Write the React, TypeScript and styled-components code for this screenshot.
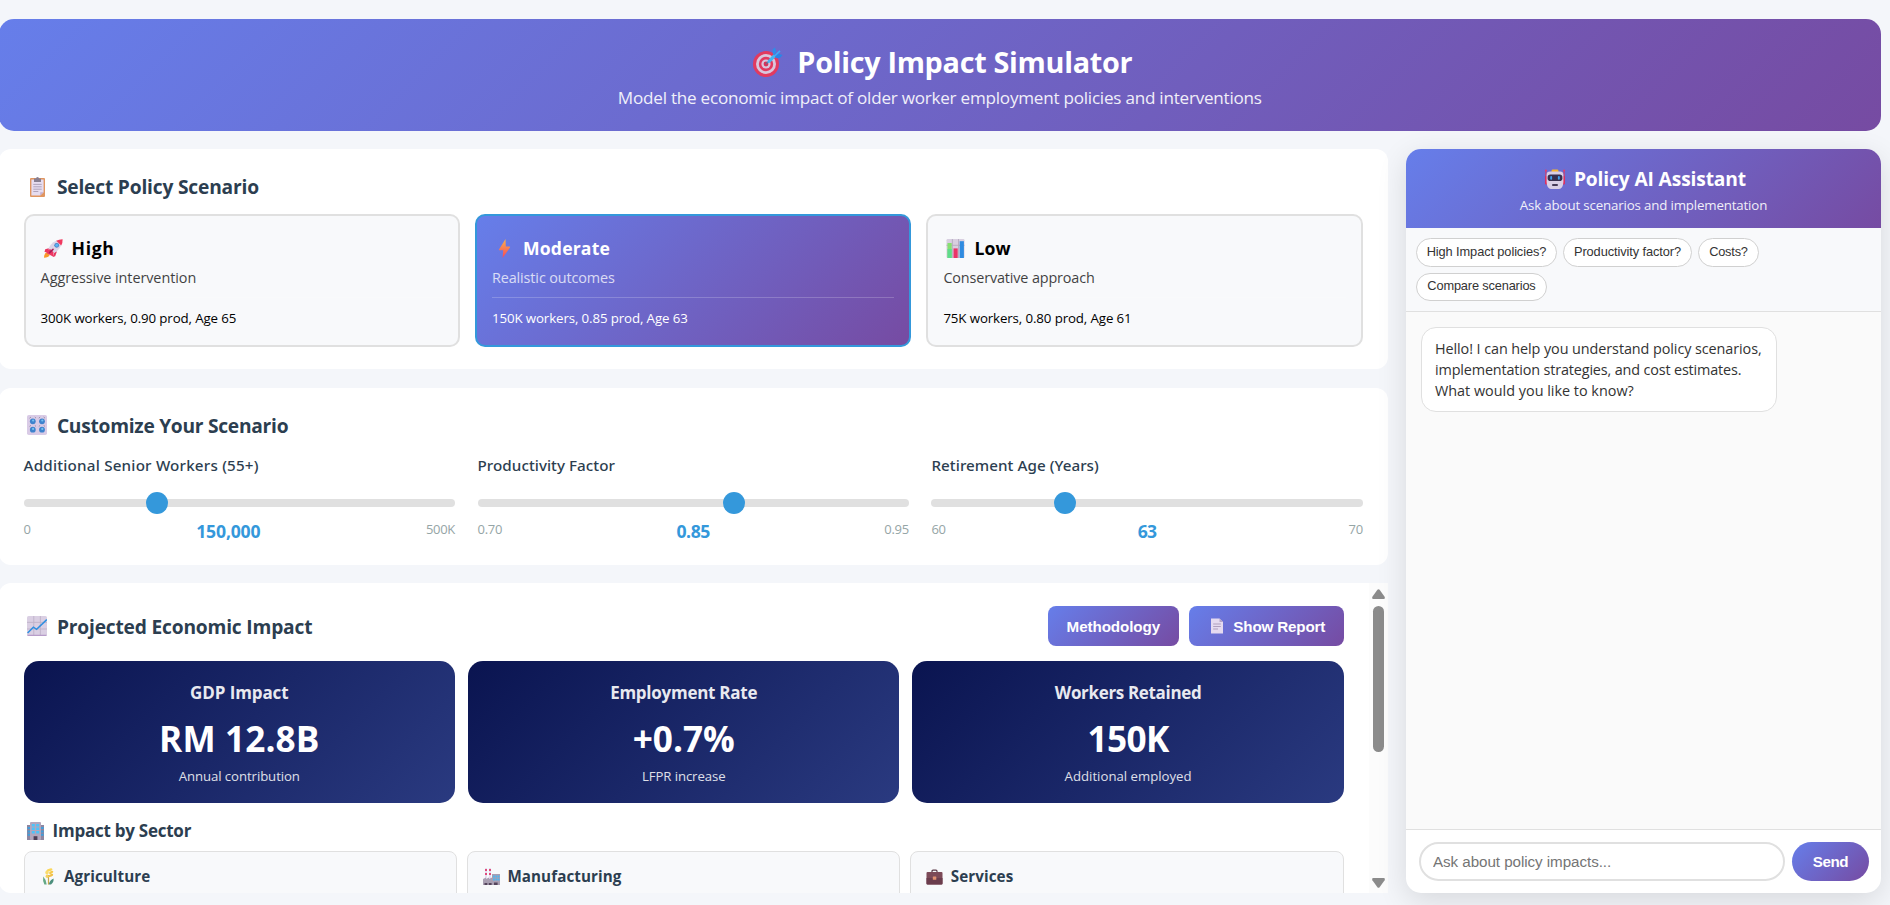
import React, { useState } from "react";
import styled, { createGlobalStyle, css } from "styled-components";

const brand = "linear-gradient(135deg, #667eea 0%, #764ba2 100%)";
const sans = '"Open Sans", "Noto Sans", sans-serif';
const arial = '"Liberation Sans", Arial, sans-serif';

const GlobalStyle = createGlobalStyle`
  * { box-sizing: border-box; }
  body {
    margin: 0;
    background: #f4f6fa;
    font-family: ${sans};
    overflow: hidden;
  }
  h1, h2, h3, h4, p { margin: 0; }
`;

/* ---------- page ---------- */

const Page = styled.div`
  width: 1882.4px;
  height: 905px;
  margin-left: -1.4px;
  padding-top: 19px;
  display: flex;
  flex-direction: column;
  gap: 18px;
`;

const Text = styled.span<{ $ls?: number }>`
  letter-spacing: ${(p) => p.$ls ?? 0}px;
`;

const Banner = styled.header`
  height: 112px;
  padding-top: 23px;
  border-radius: 15px;
  background: ${brand};
  color: #fff;
  text-align: center;
  flex: none;
`;

const BannerTitle = styled.h1`
  display: flex;
  justify-content: center;
  align-items: center;
  gap: 14px;
  padding-left: 6px;
  font-size: 28.8px;
  line-height: 40px;
  font-weight: 700;
`;

const BannerSubtitle = styled.p`
  margin-top: 1px;
  font-size: 17.1px;
  line-height: 30px;
  opacity: 0.9;
`;

const Columns = styled.div`
  display: grid;
  grid-template-columns: 1389.2px 475px;
  gap: 18.2px;
  height: 744px;
`;

const MainColumn = styled.main`
  display: grid;
  grid-template-rows: 220px 177px 310px;
  align-content: space-between;
`;

const cardBase = css`
  background: #fff;
  border-radius: 12px;
`;

const Card = styled.section`
  ${cardBase}
  padding: 23px 25px 0;
`;

const SectionTitle = styled.h2`
  display: flex;
  align-items: center;
  gap: 10.3px;
  padding-left: 3px;
  color: #2c3e50;
  font-size: 19.2px;
  line-height: 29px;
  font-weight: 700;
`;

/* ---------- scenarios ---------- */

const ScenarioGrid = styled.div`
  display: grid;
  grid-template-columns: repeat(3, 1fr);
  gap: 15px;
  margin-top: 13px;
`;

const ScenarioCard = styled.article<{ $active?: boolean }>`
  height: 133px;
  padding: 19px 15px 0;
  border-radius: 10px;
  border: 2px solid ${(p) => (p.$active ? "#3498db" : "#e0e0e0")};
  background: ${(p) => (p.$active ? brand : "#f8f9fb")};
  color: ${(p) => (p.$active ? "#fff" : "#000")};
`;

const ScenarioName = styled.h3`
  display: flex;
  align-items: center;
  gap: 9px;
  padding-left: 3px;
  font-size: 17.6px;
  line-height: 27px;
`;

const ScenarioDescription = styled.p`
  margin-top: 4px;
  font-size: 14.4px;
  line-height: 24px;
  opacity: 0.75;
`;

const ScenarioParams = styled.p`
  margin-top: 7px;
  padding-top: 10px;
  border-top: 1px solid rgba(255, 255, 255, 0.2);
  font-size: 13.3px;
  line-height: 20px;
`;

/* ---------- sliders ---------- */

const SliderGrid = styled.div`
  display: grid;
  grid-template-columns: repeat(3, 1fr);
  gap: 22.6px;
  margin-top: 13px;
`;

const SliderGroup = styled.div`
  display: flex;
  flex-direction: column;
`;

const SliderLabel = styled.label`
  color: #2c3e50;
  font-family: "Noto Sans", sans-serif;
  font-size: 15.2px;
  line-height: 24px;
  font-weight: 500;
`;

const Range = styled.input`
  appearance: none;
  width: 100%;
  height: 8px;
  margin: 22px 0 11px;
  border-radius: 4px;
  background: #e0e0e0;
  outline: none;
  &::-webkit-slider-thumb {
    appearance: none;
    width: 22px;
    height: 22px;
    border-radius: 50%;
    background: #3498db;
    cursor: pointer;
  }
`;

const SliderScale = styled.div`
  display: flex;
  justify-content: space-between;
  align-items: flex-start;
  color: #95a5a6;
  font-size: 13px;
  line-height: 22px;
`;

const SliderValue = styled.strong<{ $ls: number }>`
  color: #3498db;
  font-size: 17.6px;
  line-height: 26px;
  letter-spacing: ${(p) => p.$ls}px;
`;

/* ---------- results ---------- */

const Results = styled.section`
  ${cardBase}
  display: grid;
  grid-template-columns: 1fr 19px;
  border-radius: 12px 0 0 12px;
  overflow: hidden;
`;

const ResultsBody = styled.div`
  min-height: 0;
  padding: 23px 25px 0;
  overflow: hidden;
`;

const ResultsHeader = styled.div`
  display: flex;
  align-items: center;
  justify-content: space-between;
  height: 40px;
`;

const Actions = styled.div`
  display: flex;
  gap: 10px;
`;

const ActionButton = styled.button<{ $width: number }>`
  display: flex;
  align-items: center;
  justify-content: center;
  gap: 8px;
  width: ${(p) => p.$width}px;
  height: 40px;
  padding: 0;
  border: 0;
  border-radius: 8px;
  background: ${brand};
  color: #fff;
  font: 700 15.2px ${arial};
  svg { margin-left: 2px; }
`;

const MetricGrid = styled.div`
  display: grid;
  grid-template-columns: repeat(3, 1fr);
  gap: 13px;
  margin-top: 15px;
`;

const MetricCard = styled.article`
  height: 142px;
  padding-top: 19px;
  border-radius: 15px;
  background: linear-gradient(135deg, #0a1450 0%, #2a3a80 100%);
  color: #fff;
  text-align: center;
`;

const MetricLabel = styled.h3`
  font-size: 17px;
  line-height: 26px;
  opacity: 0.9;
`;

const MetricValue = styled.div`
  margin: 8px 0 3px;
  font-size: 35.2px;
  line-height: 48px;
  font-weight: 700;
`;

const MetricNote = styled.p`
  font-size: 13.2px;
  line-height: 22px;
  opacity: 0.85;
`;

const SectorTitle = styled.h3`
  display: flex;
  align-items: center;
  gap: 8px;
  margin-top: 14.5px;
  padding-left: 3px;
  color: #2c3e50;
  font-size: 17px;
  line-height: 26px;
`;

const SectorGrid = styled.div`
  display: grid;
  grid-template-columns: repeat(3, 1fr);
  gap: 10px;
  margin-top: 7.5px;
`;

const SectorCard = styled.article`
  height: 110px;
  padding: 12px 15px;
  border: 1px solid #e0e0e0;
  border-radius: 8px;
  background: #f8f9fb;
`;

const SectorName = styled.h4`
  display: flex;
  align-items: center;
  gap: 7.4px;
  color: #2c3e50;
  font-size: 15.2px;
  line-height: 24px;
`;

const ScrollBar = styled.div`
  display: flex;
  flex-direction: column;
  align-items: center;
  padding: 6px 0 5px;
  background: #fcfcfc;
  svg { flex: none; }
`;

const ScrollThumb = styled.div`
  width: 11px;
  height: 146px;
  margin: 7px 0 auto;
  border-radius: 6px;
  background: #8b8b8b;
`;

/* ---------- chat ---------- */

const Chat = styled.aside`
  display: flex;
  flex-direction: column;
  border-radius: 15px;
  background: #fff;
  box-shadow: 0 8px 30px rgba(0, 0, 0, 0.12);
  overflow: hidden;
`;

const ChatHeader = styled.header`
  height: 79px;
  padding-top: 15.5px;
  background: ${brand};
  color: #fff;
  text-align: center;
`;

const ChatTitle = styled.h2`
  display: flex;
  align-items: center;
  justify-content: center;
  gap: 9px;
  padding-left: 4px;
  font-size: 19.2px;
  line-height: 28px;
`;

const ChatSubtitle = styled.p`
  margin-top: 2px;
  font-size: 13.3px;
  line-height: 20px;
  opacity: 0.9;
`;

const Chips = styled.div`
  display: flex;
  flex-wrap: wrap;
  gap: 6px;
  height: 84px;
  padding: 10px;
  border-bottom: 1px solid #e0e0e0;
  background: #f8f9fb;
`;

const Chip = styled.button<{ $width: number; $ls: number }>`
  width: ${(p) => p.$width}px;
  height: 28.5px;
  padding: 0 0 2px;
  border: 1px solid #d0d0d0;
  border-radius: 15px;
  background: #fff;
  color: #333;
  font: 400 12.8px ${arial};
  letter-spacing: ${(p) => p.$ls}px;
  white-space: nowrap;
`;

const Messages = styled.div`
  flex: 1;
  padding: 15px;
  background: #fafafa;
`;

const Message = styled.div`
  width: 356px;
  padding: 10px 13px;
  border: 1px solid #e0e0e0;
  border-radius: 15px;
  background: #fff;
  color: #333;
  font-size: 14.4px;
  line-height: 21px;
  white-space: nowrap;
`;

const Composer = styled.form`
  display: flex;
  gap: 7px;
  padding: 12px 12px 12px 13px;
  border-top: 1px solid #e0e0e0;
`;

const Prompt = styled.input`
  flex: 1;
  min-width: 0;
  height: 39px;
  padding: 0 12px;
  border: 2px solid #e0e0e0;
  border-radius: 20px;
  font: 400 15.2px ${arial};
  letter-spacing: -0.06px;
  &::placeholder { color: #757575; }
`;

const SendButton = styled.button`
  width: 77px;
  height: 39px;
  padding: 0;
  border: 0;
  border-radius: 20px;
  background: ${brand};
  color: #fff;
  font: 700 15.2px ${arial};
  letter-spacing: -0.4px;
`;

/* ---------- icons ---------- */

const Icon = styled.svg<{ $size: number }>`
  width: ${(p) => p.$size}px;
  height: ${(p) => p.$size}px;
  flex: none;
  display: block;
`;

const TargetIcon = () => (
  <Icon $size={30} viewBox="0 0 30 30">
    <circle cx="13" cy="17" r="13" fill="#e23a5f" />
    <circle cx="13" cy="17" r="10" fill="#d9c6dc" />
    <circle cx="13" cy="17" r="7.2" fill="#e23a5f" />
    <circle cx="13" cy="17" r="4.6" fill="#d9c6dc" />
    <circle cx="13" cy="17" r="2.4" fill="#d6335a" />
    <path d="M13.5 16.5 20 10.5" stroke="#6b6f8c" strokeWidth="1.6" strokeLinecap="round" />
    <path d="M15 13.2 20.3 7.6 22 8l.6 2-5.4 5.6q-2 1-2.6-.2-.4-1 .4-2.2z" fill="#45b4f2" />
    <path d="M20 7.2 19.6 2.4 22 .2l1.2 4.2L21.6 8z" fill="#2f8ce8" />
    <path d="M22 9.6 23.4 6.2 29.6 8l-2.4 2.8-4 .4z" fill="#2a85e6" />
    <path d="M21 8.6 26.4 3.2l1.2 1.2-5.4 5.2z" fill="#3fa9f5" />
  </Icon>
);

const ClipboardIcon = () => (
  <Icon $size={20} viewBox="0 0 20 20">
    <rect x="3" y="1" width="15" height="19" rx="1" fill="#e0955f" />
    <path d="M4.4 2.6h12.2v12.6l-3.4 3.4H4.4z" fill="#e6dcf0" />
    <path d="M16.6 15.2h-3.4v3.4z" fill="#c3afd0" />
    <path d="M7 1.5h2q0-1.5 1.5-1.5T12 1.5h2V5H7z" fill="#877f92" />
    <path d="M6.3 7.4h8.4M6.3 9.8h8.4M6.3 12.2h8.4M6.3 14.5h5" stroke="#a99db5" strokeWidth="0.9" />
  </Icon>
);

const KnobsIcon = () => (
  <Icon $size={20} viewBox="0 0 20 20">
    <rect width="20" height="20" rx="1.8" fill="#d9cbe6" />
    <path d="M2.5 3.2 4 2M9 3.2 7.8 2M11.8 3.2 13.2 2M18 3.2 16.6 2M2.5 11.4 4 10.4M9 11.4 7.8 10.4M11.8 11.4 13.2 10.4M18 11.4 16.6 10.4" stroke="#9d93ac" strokeWidth="1" />
    {[[5.8, 6.3], [15, 6.3], [5.8, 14.7], [15, 14.7]].map(([cx, cy]) => (
      <g key={`${cx}-${cy}`}>
        <circle cx={cx} cy={cy} r="2.9" fill="#3f83cd" />
        <circle cx={cx + 0.3} cy={cy - 0.8} r="1.1" fill="#73c2f2" />
      </g>
    ))}
  </Icon>
);

const TrendIcon = () => (
  <Icon $size={20} viewBox="0 0 20 20">
    <rect width="20" height="20" rx="1.6" fill="#dacfe3" />
    <path d="M6.8 0v20M13.4 0v20M0 6.4h20M0 13h20" stroke="#bfb2ca" strokeWidth="0.9" />
    <path d="M.5 19.4h19" stroke="#b79dc9" strokeWidth="1.2" />
    <path d="M.6 17 6.4 11.2 9.6 13.4 19.8 3.6" fill="none" stroke="#2f8fe0" strokeWidth="1.5" />
  </Icon>
);

const RocketIcon = () => (
  <Icon $size={19} viewBox="0 0 19 19">
    <path d="M0 18.8q0-4.6 2.8-5.6L5.6 16Q4.6 18.8 0 18.8z" fill="#f99a2a" />
    <path d="M5.6 9 1.2 10.2.5 13l3.6.6zM10 13.4 8.8 18l2.4-.8 1.8-5z" fill="#e8365f" />
    <path d="M3.6 12.4Q5.6 4.6 12.6 1.6l4.6 4.6Q14.6 13 6.6 15.4z" fill="#ddd4e8" />
    <path d="M12.2 1.8Q15.4.1 18.6.2q.2 3.400-1.400 6.400z" fill="#f0395f" />
    <circle cx="12.7" cy="6.3" r="2.4" fill="#4c7fc4" />
    <circle cx="12.7" cy="6.3" r="1.5" fill="#56b7f5" />
    <path d="M2 10.4l4.5-.2 3 3-.5 4.2-3.4-1.6-2.8-1.6z" fill="#ee3763" />
    <path d="M5.6 13.6 9 10.4" stroke="#a81f58" strokeWidth="1.6" strokeLinecap="round" />
  </Icon>
);

const BoltIcon = () => (
  <Icon $size={19} viewBox="0 0 19 19">
    <defs>
      <linearGradient id="bolt" x1="0" y1="0" x2="0" y2="1">
        <stop offset="0" stopColor="#fdb347" />
        <stop offset="1" stopColor="#f5475c" />
      </linearGradient>
    </defs>
    <path d="M10.5 0 4 10.4q-.2.8.6.8h3.6L7.6 19 15 8.4q.2-1-.6-1h-3.6z" fill="url(#bolt)" />
  </Icon>
);

const BarsIcon = () => (
  <Icon $size={19} viewBox="0 0 19 19">
    <rect x=".5" width="18" height="19" rx="1.2" fill="#d8cfe0" />
    <path d="M6.4 0v19M12.5 0v19M.5 6.3h18" stroke="#b5abc0" strokeWidth="0.9" />
    <rect x="1.5" y="4" width="4.2" height="15" fill="#86e070" />
    <rect x="1.5" y="10" width="4.2" height="9" fill="#5fdc8c" />
    <rect x="7.5" y="9.4" width="4.2" height="9.6" fill="#ea3468" />
    <rect x="13.7" y="2.2" width="4.2" height="16.8" fill="#2f8be0" />
  </Icon>
);

const PageIcon = () => (
  <Icon $size={16} viewBox="0 0 16 16">
    <path d="M2 .5h8.5L14 4v11.5H2z" fill="#e5daf0" />
    <path d="M10.5.5 14 4h-3.5z" fill="#b5a3c6" />
    <path d="M4.2 6h7.6M4.2 8.5h7.6M4.2 11h4.8" stroke="#a898b8" strokeWidth="0.9" />
  </Icon>
);

const BuildingIcon = () => (
  <Icon $size={18} viewBox="0 0 18 18">
    <path d="M0 3h4v15H0zM13 3h4v15h-4z" fill="#8e86a0" />
    <path d="M.6 5h2.6v2H.6zM.6 8.4h2.6v2H.6zM.6 11.8h2.6v2H.6zM14 5h2.6v2H14zM14 8.4h2.6v2H14zM14 11.8h2.6v2H14z" fill="#3f9fdd" />
    <rect x="3" width="11" height="18" rx="1" fill="#b3a6bd" />
    {[2, 5.5, 9].map((y) => (
      <path key={y} d={`M4.8 ${y}h3v2.4h-3zM9.2 ${y}h3v2.4h-3z`} fill="#4cc4fa" />
    ))}
    <rect x="6.6" y="14.2" width="3.8" height="3.8" fill="#4d3e56" />
  </Icon>
);

const WheatIcon = () => (
  <Icon $size={17} viewBox="0 0 17 17">
    <path d="M8.5 16.5V7" stroke="#c9a84a" strokeWidth="1.2" />
    <ellipse cx="9.5" cy="1.9" rx="3" ry="1.3" fill="#fbd75a" transform="rotate(-14 9.5 1.9)" />
    <ellipse cx="11.2" cy="4.4" rx="2.3" ry="1.2" fill="#f6c94a" transform="rotate(-28 11.2 4.4)" />
    <ellipse cx="7" cy="4.6" rx="1.7" ry="2" fill="#fbdc6c" />
    <ellipse cx="11" cy="7.4" rx="2.4" ry="1.2" fill="#f1c04a" transform="rotate(-24 11 7.4)" />
    <ellipse cx="7.2" cy="8.2" rx="1.6" ry="1.8" fill="#f7d25d" />
    <path d="M3.2 8.5q3.3 3.5 3.5 8H4.4Q2.5 12.5 3.2 8.5z" fill="#64a985" />
    <path d="M13.6 10.5q.3 3.8-2.6 6H8.7q1-4.400 4.900-6z" fill="#4c8f7d" />
  </Icon>
);

const FactoryIcon = () => (
  <Icon $size={17} viewBox="0 0 17 17">
    <path d="M2 0h2v11H2zM6 0h2v11H6z" fill="#e5def0" />
    <path d="M2 1h2v2H2zM2 5h2v2H2zM6 1h2v2H6zM6 5h2v2H6z" fill="#df4c7d" />
    <path d="M0 11l3-1.5V11l3-1.5V11l3-1.5V17H0z" fill="#a99fb2" />
    <rect x="9" y="6" width="8" height="11" fill="#a99fb2" />
    <path d="M10 7.5h1.8v2H10zM12.6 7.5h1.8v2h-1.8zM15 7.5h1.5v2H15zM10 10.5h1.8v2H10zM12.6 10.5h1.8v2h-1.8zM15 10.5h1.5v2H15z" fill="#4cb7f3" />
    <path d="M1.5 15h2.8v2H1.5zM5.8 15h2.8v2H5.8zM11 14.5h3.6V17H11z" fill="#54455c" />
  </Icon>
);

const BriefcaseIcon = () => (
  <Icon $size={17} viewBox="0 0 17 17">
    <path d="M6 4.5V3.2q0-1 1-1h3q1 0 1 1v1.300" fill="none" stroke="#5a3947" strokeWidth="1.2" />
    <rect x=".5" y="4" width="16" height="12.5" rx="1" fill="#7c4a58" />
    <path d="M.5 10h16v5.5q0 1-1 1h-14q-1 0-1-1z" fill="#6b3d4d" />
    <rect x="6.8" y="8.4" width="3.5" height="3.3" rx=".5" fill="#e39170" />
  </Icon>
);

const RobotIcon = () => (
  <Icon $size={20} viewBox="0 0 20 20">
    <path d="M.9 1v13M19.1 1v13" stroke="#e2355f" strokeWidth="1" />
    <circle cx=".9" cy="1.5" r=".9" fill="#ee3d68" />
    <circle cx="19.1" cy="1.5" r=".9" fill="#ee3d68" />
    <rect x="0" y="7" width="2.4" height="8.5" rx="1" fill="#dc2f62" />
    <rect x="17.6" y="7" width="2.4" height="8.5" rx="1" fill="#dc2f62" />
    <path d="M6.5 3.2V2q0-1.400 1.400-1.400h4.200q1.400 0 1.400 1.400v1.200z" fill="#f8b72f" />
    <path d="M1.6 6q0-3.400 3.400-3.400h10q3.400 0 3.400 3.400v7q-.4 7-4.400 7H6q-4 0-4.400-7z" fill="#d9cfe6" />
    <rect x="2.6" y="5.6" width="14.8" height="6.400" rx="2.8" fill="#37304f" />
    <rect x="5.2" y="7" width="1.9" height="3.7" rx=".9" fill="#3fa2ee" />
    <rect x="12.9" y="7" width="1.9" height="3.7" rx=".9" fill="#3fa2ee" />
    <rect x="7" y="15" width="6" height="1.9" rx=".9" fill="#463b58" />
  </Icon>
);

const ScrollArrow = styled.svg<{ $down?: boolean }>`
  width: 13px;
  height: 10px;
  transform: ${(p) => (p.$down ? "rotate(180deg)" : "none")};
`;

const Arrow = ({ down }: { down?: boolean }) => (
  <ScrollArrow $down={down} viewBox="0 0 13 10">
    <path d="M5.4.8q1.1-1.3 2.2 0l5 7q.9 2.2-1 2.2H1.4Q-.5 10 .4 7.800z" fill="#8b8b8b" />
  </ScrollArrow>
);

/* ---------- data ---------- */

const scenarios = [
  { icon: <RocketIcon />, name: "High", nls: 0.6, text: "Aggressive intervention", tls: -0.06, params: "300K workers, 0.90 prod, Age 65" },
  { icon: <BoltIcon />, name: "Moderate", nls: 0.17, text: "Realistic outcomes", tls: -0.12, params: "150K workers, 0.85 prod, Age 63", active: true },
  { icon: <BarsIcon />, name: "Low", nls: 0.2, text: "Conservative approach", tls: -0.14, params: "75K workers, 0.80 prod, Age 61" },
];

const sliders = [
  { id: "workers", label: "Additional Senior Workers (55+)", ls: 0.2, min: 0, max: 500000, step: 10000, value: 150000, low: "0", high: "500K", vls: -0.17, format: (v: number) => v.toLocaleString("en-US") },
  { id: "productivity", label: "Productivity Factor", ls: 0.05, min: 0.7, max: 0.95, step: 0.01, value: 0.85, low: "0.70", high: "0.95", vls: -0.4, format: (v: number) => v.toFixed(2) },
  { id: "age", label: "Retirement Age (Years)", ls: 0.05, min: 60, max: 70, step: 1, value: 63, low: "60", high: "70", vls: -0.6, format: (v: number) => String(v) },
];

const metrics = [
  { label: "GDP Impact", ls: -0.1, value: "RM 12.8B", vls: 0.1, note: "Annual contribution", nls: -0.08 },
  { label: "Employment Rate", ls: -0.26, value: "+0.7%", vls: 0, note: "LFPR increase", nls: -0.09 },
  { label: "Workers Retained", ls: -0.34, value: "150K", vls: -0.6, note: "Additional employed", nls: 0 },
];

const sectors = [
  { name: "Agriculture", icon: <WheatIcon /> },
  { name: "Manufacturing", icon: <FactoryIcon /> },
  { name: "Services", icon: <BriefcaseIcon /> },
];

const chips = [
  { text: "High Impact policies?", width: 141, ls: -0.1 },
  { text: "Productivity factor?", width: 129, ls: -0.09 },
  { text: "Costs?", width: 61, ls: -0.2 },
  { text: "Compare scenarios", width: 131, ls: -0.16 },
];

type SliderProps = (typeof sliders)[number];

const Slider = ({ id, label, ls, min, max, step, value, low, high, vls, format }: SliderProps) => {
  const [current, setCurrent] = useState(value);
  return (
    <SliderGroup>
      <SliderLabel htmlFor={id}><Text $ls={ls}>{label}</Text></SliderLabel>
      <Range
        id={id}
        type="range"
        min={min}
        max={max}
        step={step}
        value={current}
        onChange={(e) => setCurrent(Number(e.target.value))}
      />
      <SliderScale>
        <Text $ls={-0.3}>{low}</Text>
        <SliderValue $ls={vls}>{format(current)}</SliderValue>
        <Text $ls={-0.3}>{high}</Text>
      </SliderScale>
    </SliderGroup>
  );
};

export default function App() {
  return (
    <>
      <GlobalStyle />
      <Page>
        <Banner>
          <BannerTitle><TargetIcon /><Text $ls={-0.3}>Policy Impact Simulator</Text></BannerTitle>
          <BannerSubtitle>
            <Text $ls={-0.235}>Model the economic impact of older worker employment policies and interventions</Text>
          </BannerSubtitle>
        </Banner>

        <Columns>
          <MainColumn>
            <Card>
              <SectionTitle><ClipboardIcon /><Text $ls={-0.19}>Select Policy Scenario</Text></SectionTitle>
              <ScenarioGrid>
                {scenarios.map((s) => (
                  <ScenarioCard key={s.name} $active={s.active}>
                    <ScenarioName>{s.icon}<Text $ls={s.nls}>{s.name}</Text></ScenarioName>
                    <ScenarioDescription><Text $ls={s.tls}>{s.text}</Text></ScenarioDescription>
                    <ScenarioParams><Text $ls={-0.12}>{s.params}</Text></ScenarioParams>
                  </ScenarioCard>
                ))}
              </ScenarioGrid>
            </Card>

            <Card>
              <SectionTitle><KnobsIcon /><Text $ls={-0.27}>Customize Your Scenario</Text></SectionTitle>
              <SliderGrid>
                {sliders.map((s) => <Slider key={s.id} {...s} />)}
              </SliderGrid>
            </Card>

            <Results>
              <ResultsBody>
                <ResultsHeader>
                  <SectionTitle><TrendIcon /><Text $ls={-0.19}>Projected Economic Impact</Text></SectionTitle>
                  <Actions>
                    <ActionButton $width={131}><Text $ls={-0.1}>Methodology</Text></ActionButton>
                    <ActionButton $width={155}><PageIcon /><Text $ls={-0.16}>Show Report</Text></ActionButton>
                  </Actions>
                </ResultsHeader>
                <MetricGrid>
                  {metrics.map((m) => (
                    <MetricCard key={m.label}>
                      <MetricLabel><Text $ls={m.ls}>{m.label}</Text></MetricLabel>
                      <MetricValue><Text $ls={m.vls}>{m.value}</Text></MetricValue>
                      <MetricNote><Text $ls={m.nls}>{m.note}</Text></MetricNote>
                    </MetricCard>
                  ))}
                </MetricGrid>
                <SectorTitle><BuildingIcon /><Text $ls={-0.25}>Impact by Sector</Text></SectorTitle>
                <SectorGrid>
                  {sectors.map((s) => (
                    <SectorCard key={s.name}>
                      <SectorName>{s.icon}<Text $ls={0.08}>{s.name}</Text></SectorName>
                    </SectorCard>
                  ))}
                </SectorGrid>
              </ResultsBody>
              <ScrollBar><Arrow /><ScrollThumb /><Arrow down /></ScrollBar>
            </Results>
          </MainColumn>

          <Chat>
            <ChatHeader>
              <ChatTitle><RobotIcon /><Text $ls={-0.13}>Policy AI Assistant</Text></ChatTitle>
              <ChatSubtitle><Text $ls={-0.16}>Ask about scenarios and implementation</Text></ChatSubtitle>
            </ChatHeader>
            <Chips>
              {chips.map((c) => <Chip key={c.text} $width={c.width} $ls={c.ls}>{c.text}</Chip>)}
            </Chips>
            <Messages>
              <Message>
                <Text $ls={-0.08}>Hello! I can help you understand policy scenarios,</Text><br />
                <Text $ls={-0.15}>implementation strategies, and cost estimates.</Text><br />
                <Text>What would you like to know?</Text>
              </Message>
            </Messages>
            <Composer onSubmit={(e) => e.preventDefault()}>
              <Prompt placeholder="Ask about policy impacts..." />
              <SendButton type="submit">Send</SendButton>
            </Composer>
          </Chat>
        </Columns>
      </Page>
    </>
  );
}
